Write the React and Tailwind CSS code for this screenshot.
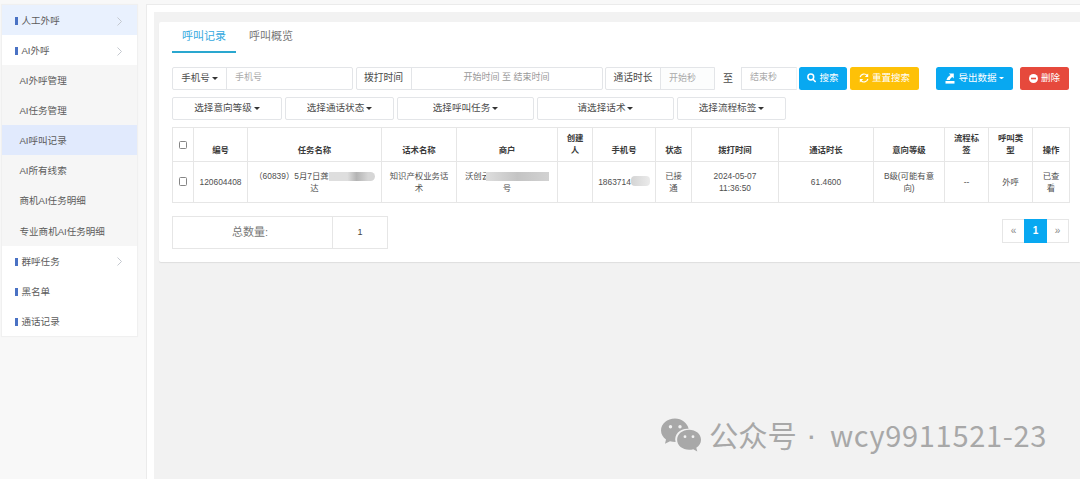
import React from 'react';

const sans = "font-['Liberation_Sans','Noto_Sans_CJK_SC',sans-serif]";

const menu = [
  { label: '人工外呼', top: true, arrow: true, bg: 'bg-[#e9f1fe]' },
  { label: 'AI外呼', top: true, arrow: true, bg: 'bg-white' },
  { label: 'AI外呼管理', bg: 'bg-[#f6f6f6]' },
  { label: 'AI任务管理', bg: 'bg-[#f6f6f6]' },
  { label: 'AI呼叫记录', bg: 'bg-[#e1eafd]' },
  { label: 'AI所有线索', bg: 'bg-[#f6f6f6]' },
  { label: '商机AI任务明细', bg: 'bg-[#f6f6f6]' },
  { label: '专业商机AI任务明细', bg: 'bg-[#f6f6f6]' },
  { label: '群呼任务', top: true, arrow: true, bg: 'bg-white' },
  { label: '黑名单', top: true, bg: 'bg-white' },
  { label: '通话记录', top: true, bg: 'bg-white' },
];

function Sidebar() {
  return (
    <nav className="mt-[5px] ml-[2px] w-[135px] shrink-0 self-start shadow-[0_0_1px_1px_#f0f0f0]">
      {menu.map((m) => (
        <div
          key={m.label}
          className={`flex h-[30.1px] items-center pt-[2px] whitespace-nowrap text-[9.55px] text-[#5c5c5c] ${m.bg} ${m.top ? 'pl-[13px]' : 'pl-[17.5px]'}`}
        >
          {m.top && <span className="mr-[4px] h-[7.5px] w-[2.5px] bg-[#4a72c4]" />}
          <span>{m.label}</span>
          {m.arrow && (
            <svg className="mr-[15px] ml-auto" width="5" height="9" viewBox="0 0 5 9" fill="none" stroke="#c4c8cf">
              <path d="M.5.5l4 4-4 4" />
            </svg>
          )}
        </div>
      ))}
    </nav>
  );
}

function Caret({ fill = '#333', size = 6 }) {
  return (
    <svg className="ml-[2px] shrink-0" width={size} height={size / 2} viewBox="0 0 6 3" fill={fill}>
      <path d="M0 0h6L3 3z" />
    </svg>
  );
}

const field = 'flex h-[23px] items-center border border-[#e3e5e8] bg-white whitespace-nowrap';

function Filters() {
  return (
    <div className="mt-[13px] ml-[13px] flex h-[24px] items-center text-[9.5px] text-[#4c4c4c]">
      <div className={`${field} w-[181px] rounded-[2px]`}>
        <span className="flex h-full w-[54px] items-center justify-center border-r border-[#e3e5e8]">
          手机号
          <Caret />
        </span>
        <span className="pl-[8px] text-[9px] text-[#aaa]">手机号</span>
      </div>
      <div className={`${field} ml-[2.5px] w-[247px] rounded-[2px]`}>
        <span className="flex h-full w-[55px] items-center justify-center border-r border-[#e3e5e8] text-[9.8px]">拨打时间</span>
        <span className="flex-1 text-center text-[9px] text-[#999]">开始时间 至 结束时间</span>
      </div>
      <div className={`${field} ml-[2.500px] w-[110px] rounded-l-[2px]`}>
        <span className="flex h-full w-[55px] items-center justify-center border-r border-[#e3e5e8] text-[9.8px]">通话时长</span>
        <span className="h-full flex-1 bg-[#fcfdfd] pl-[8px] text-[9px] leading-[21px] text-[#aaa]">开始秒</span>
      </div>
      <span className="w-[26px] text-center text-[10px]">至</span>
      <div className={`${field} w-[56px] border-r-[#f1f4f5] bg-[#fcfdfd] pl-[8px] text-[9px] text-[#aaa]`}>结束秒</div>
      <button className="ml-[2px] flex h-[23px] w-[48px] items-center justify-center rounded-[2.5px] bg-[#08a8f1] text-white">
        <svg className="mr-[3px]" width="9" height="10" viewBox="0 0 9 10" fill="none" stroke="white" strokeWidth="1.5">
          <circle cx="3.8" cy="4" r="2.9" />
          <path d="M6 6.2l2.6 2.8" />
        </svg>
        搜索
      </button>
      <button className="ml-[3px] flex h-[23px] w-[69px] items-center justify-center rounded-[2.5px] bg-[#fec107] text-white">
        <svg className="mr-[3px]" width="10" height="10" viewBox="0 0 10 10" fill="none" stroke="white" strokeWidth="1.2">
          <path d="M1.1 4.2A4 4 0 0 1 8.2 2.6M8.9 5.8A4 4 0 0 1 1.8 7.4" />
          <path d="M9.2.5v3.4H5.8zM.8 9.5V6.1h3.4z" fill="white" stroke="none" />
        </svg>
        重置搜索
      </button>
      <button className="ml-[17px] flex h-[23px] w-[77px] items-center justify-center rounded-[2.5px] bg-[#08a8f1] text-white">
        <svg className="mr-[3px]" width="10" height="11" viewBox="0 0 10 11" fill="white">
          <path d="M.5 8h9v2.600h-9z" />
          <path d="M3.800.4h5v5L7.300 4C5.800 5 5.200 5.700 4.800 7H1.500C2 5 3.600 3.200 5.500 2.100z" />
        </svg>
        导出数据
        <Caret fill="#fff" size={5} />
      </button>
      <button className="ml-[7px] flex h-[23px] w-[49px] items-center justify-center rounded-[2.5px] bg-[#e6493c] text-white">
        <svg className="mr-[3px]" width="9" height="9" viewBox="0 0 9 9">
          <circle cx="4.5" cy="4.5" r="4.5" fill="white" />
          <path d="M2 3.7h5v1.6H2z" fill="#e4483b" />
        </svg>
        删除
      </button>
    </div>
  );
}

const selects = [
  { label: '选择意向等级', w: 'w-[110px]' },
  { label: '选择通话状态', w: 'w-[109px]' },
  { label: '选择呼叫任务', w: 'w-[137px]' },
  { label: '请选择话术', w: 'w-[137px]' },
  { label: '选择流程标签', w: 'w-[109px]' },
];

function Check() {
  return <span className="inline-block size-[8.5px] rounded-[1.5px] border border-[#858585] bg-white align-middle" />;
}

const widths = [21, 54, 134, 75, 101, 35, 63, 36, 87, 95, 71, 44, 44, 37];
const heads = ['编号', '任务名称', '话术名称', '商户', '创建\n人', '手机号', '状态', '拨打时间', '通话时长', '意向等级', '流程标\n签', '呼叫类\n型', '操作'];

const Blur = ({ className }) => <span className={`inline-block align-middle ${className}`} />;

function Records() {
  const cells = [
    '120604408',
    <>
      （60839）5月7日龚
      <Blur className="h-[9px] w-[46px] rounded-r-[5px] bg-linear-to-r from-[#dedede] from-40% via-[#b4b4b4] via-60% to-[#d6d6d6] to-85%" />
      <br />达
    </>,
    <>知识产权业务话<br />术</>,
    <>
      沃创云
      <Blur className="relative -ml-[4px] h-[9px] w-[63px] bg-linear-to-r from-[#dedede] via-[#c4c4c4] to-[#d2d2d2]" />
      <br />号
    </>,
    '',
    <>
      1863714
      <Blur className="-mt-[3px] h-[10px] w-[19px] rounded-[4px] bg-linear-to-r from-[#d4d4d4] to-[#ebebeb]" />
    </>,
    <>已接<br />通</>,
    <>2024-05-07<br />11:36:50</>,
    '61.4600',
    <>B级(可能有意<br />向)</>,
    '--',
    '外呼',
    <>已查<br />看</>,
  ];
  return (
    <table className="mt-[7px] ml-[13px] w-[897px] table-fixed border-collapse text-center text-[8.4px] leading-[12px] text-[#505050]">
      <colgroup>
        {widths.map((w, i) => (
          <col key={i} style={{ width: w }} />
        ))}
      </colgroup>
      <thead>
        <tr className="h-[34px]">
          <th className="border border-[#e6e6e6] p-0 align-middle leading-none">
            <Check />
          </th>
          {heads.map((h) => (
            <th key={h} className="border border-[#e6e6e6] p-0 pb-[5px] align-bottom font-bold whitespace-pre text-[#3a3a3a]">
              {h}
            </th>
          ))}
        </tr>
      </thead>
      <tbody>
        <tr className="h-[41px]">
          <td className="border border-[#e6e6e6] p-0 pb-[2px] leading-none">
            <Check />
          </td>
          {cells.map((c, i) => (
            <td key={i} className="border border-[#e6e6e6] p-0 align-middle whitespace-nowrap">
              {c}
            </td>
          ))}
        </tr>
      </tbody>
    </table>
  );
}

export default function App() {
  return (
    <div className={`relative flex h-[479px] w-[1080px] overflow-hidden bg-[#f8f8f8] ${sans}`}>
      <Sidebar />
      <main className="mt-[4px] ml-[9px] flex-1 border-t border-l border-[#ebebeb] bg-white pt-[7px] pl-[7px]">
        <div className="h-full bg-[#f2f2f2] pt-[10px] pl-[5px]">
          <section className="h-[240px] rounded-l-[2px] bg-white shadow-[0_1px_1px_#dedede]">
            <div className="ml-[13px] flex h-[31px] text-[11px] text-[#777]">
              <span className="w-[64px] border-b-2 border-[#2aa7cf] text-center leading-[29px] text-[#35a9e0]">呼叫记录</span>
              <span className="ml-[13px] leading-[29px]">呼叫概览</span>
            </div>
            <Filters />
            <div className="mt-[7px] ml-[13px] flex gap-[3px] text-[9.6px] text-[#4c4c4c]">
              {selects.map((s) => (
                <div key={s.label} className={`${field} ${s.w} justify-center rounded-[2px]`}>
                  {s.label}
                  <Caret />
                </div>
              ))}
            </div>
            <Records />
            <div className="mt-[13px] mr-[11px] ml-[13px] flex items-start justify-between">
              <div className="flex h-[33px] border border-[#e6e6e6]">
                <span className="w-[160px] border-r border-[#e6e6e6] pr-[5px] text-center text-[11px] leading-[30px] text-[#777]">总数量:</span>
                <span className="w-[54px] text-center text-[9px] leading-[31px] text-[#444]">1</span>
              </div>
              <div className="mt-[3px] flex h-[24px] w-[67px] border border-[#e6e6e6] text-center text-[10px] leading-[22px] text-[#888]">
                <span className="w-[21px]">«</span>
                <span className="-my-px h-[24px] w-[23px] bg-[#08a8f1] leading-[23px] font-bold text-white">1</span>
                <span className="flex-1">»</span>
              </div>
            </div>
          </section>
        </div>
      </main>
      <div className="absolute top-[413px] left-[661px] flex h-[44px] items-center whitespace-nowrap text-[#a8a8a8] font-['Noto_Sans_CJK_SC',sans-serif]">
        <svg width="41" height="34" viewBox="0 0 41 34">
          <path d="M14 .5C6.2.5 0 5.8 0 12.4c0 3.7 2 6.8 5 9L4 25.8l5-2.6c1.800.6 3.500.8 5.600.8-2-8 5-14 13-13.300C26.300 4.900 20.700.5 14 .5z" fill="#a8a8a8" />
          <path d="M40 21.800c0-5.700-5.300-10-11.900-10s-12 4.300-12 10 5.300 10 12 10c1.500 0 2.800-.2 4.200-.6l4 2.200-1-3.600c2.900-1.900 4.700-4.700 4.700-8z" fill="#a8a8a8" />
          <g fill="#f2f2f2">
            <circle cx="9.500" cy="8.700" r="1.700" />
            <circle cx="19" cy="8.700" r="1.700" />
            <circle cx="24" cy="18.700" r="1.400" />
            <circle cx="32" cy="18.700" r="1.400" />
          </g>
        </svg>
        <span className="ml-[7px] text-[29.300px]">公众号</span>
        <span className="w-[33px] pr-[4px] text-center text-[32px] leading-none font-['Liberation_Sans',sans-serif]">·</span>
        <span className="text-[29px] tracking-[0.700px]">wcy9911521-23</span>
      </div>
    </div>
  );
}
